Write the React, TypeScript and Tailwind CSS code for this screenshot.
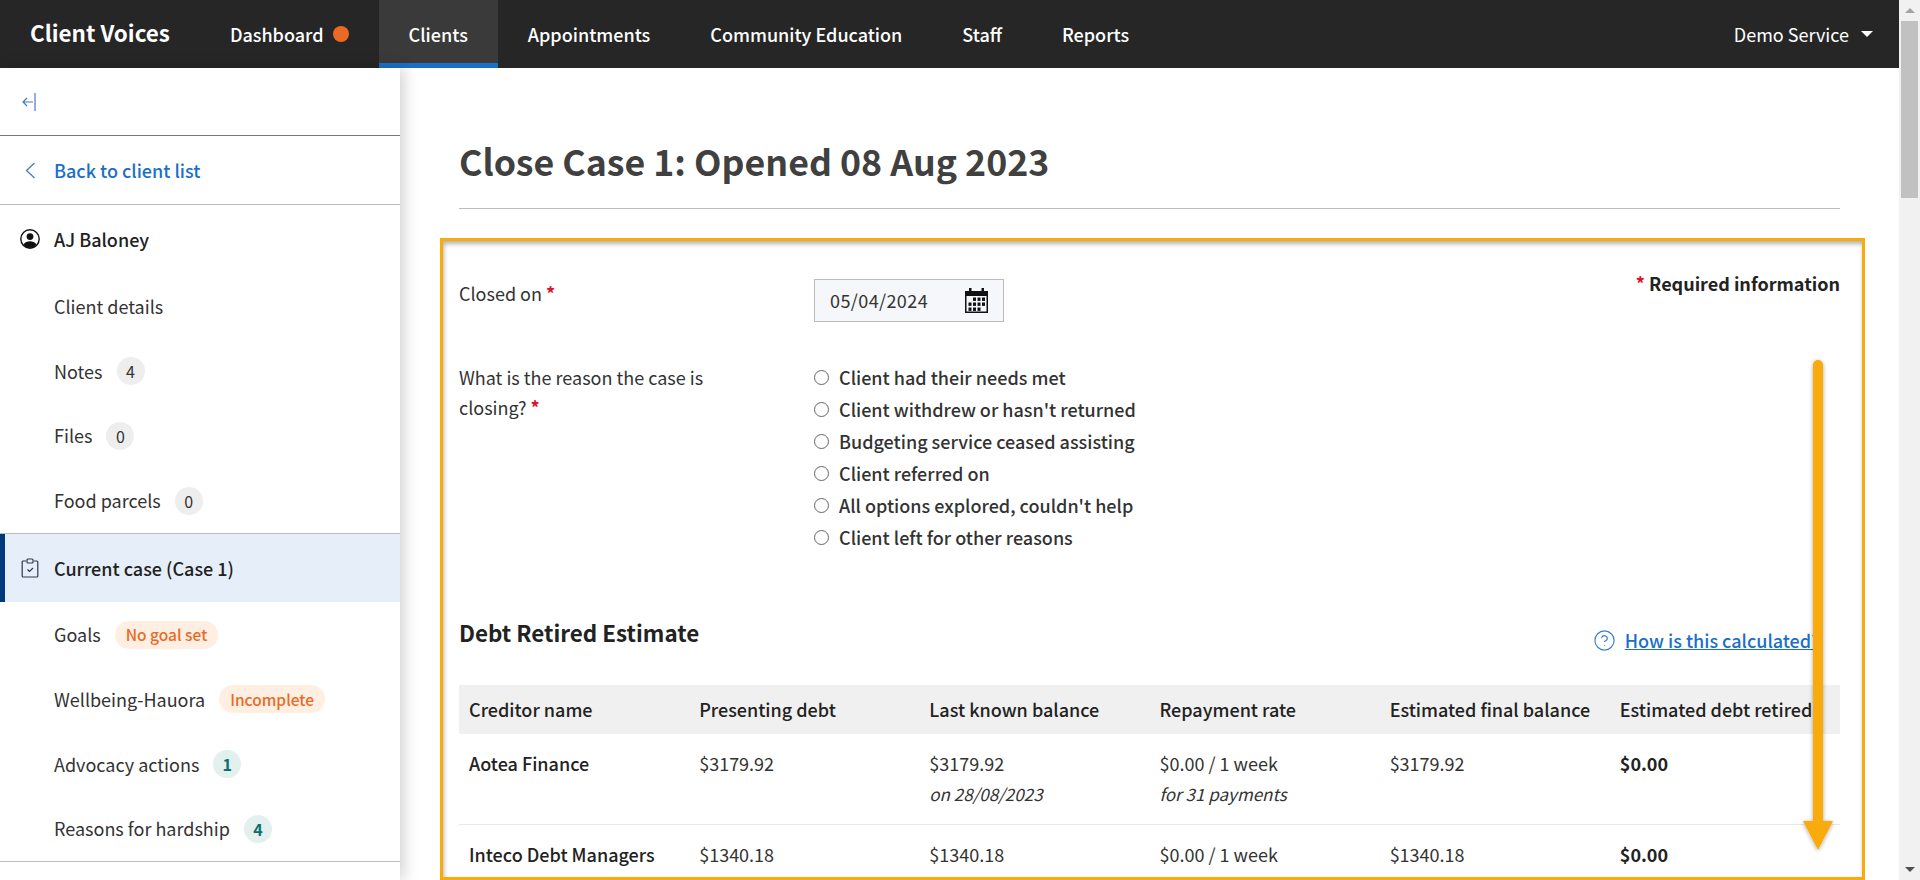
import { CircleHelp } from "lucide-react";

const font = "font-['Noto_Sans_CJK_SC','Liberation_Sans',sans-serif]";

function Badge({ label, tone }: { label: string; tone: "grey" | "teal" | "orange" }) {
  const tones = {
    grey: "bg-[#eeeeee] text-[#333333] w-[28px] justify-center text-[16px]",
    teal: "bg-[#e2f0ee] text-[#0f6e6a] w-[28px] justify-center font-semibold text-[16px]",
    orange: "bg-[#ffefe3] text-[#ea6a24] px-[11px] font-medium text-[15.5px]",
  };
  return (
    <span className={`ml-[14px] inline-flex h-[28px] items-center rounded-full leading-none ${tones[tone]}`}>
      {label}
    </span>
  );
}

function SideItem({ label, children }: { label: string; children?: React.ReactNode }) {
  return (
    <div className="flex h-[64.8px] items-center pl-[54px] text-[18px] text-[#333333]">
      <span>{label}</span>
      {children}
    </div>
  );
}

function Sidebar() {
  return (
    <aside className="z-10 w-[400px] shrink-0 bg-white shadow-[4px_0_14px_rgba(0,0,0,0.18)]">
      <div className="flex h-[67px] items-center pl-[22px]">
        <svg width="14" height="18" viewBox="0 0 14 18" fill="none" stroke="#4a78c8" strokeWidth="1.2">
          <path d="M1 9h10M5 5 1 9l4 4" />
          <path d="M13 0v18" />
        </svg>
      </div>
      <div className="h-px bg-[#777777]" />
      <div className="flex h-[68px] items-center pl-[25px] text-[18px] font-medium text-[#1a6fc9]">
        <svg width="11" height="17" viewBox="0 0 11 17" fill="none" stroke="#4a78c8" strokeWidth="1.3" className="mr-[18px]">
          <path d="M9.5 1 1.5 8.5l8 7.5" />
        </svg>
        <span>Back to client list</span>
      </div>
      <div className="h-px bg-[#bbbbbb]" />
      <div className="flex h-[69px] items-center pb-[1px] pl-[20px] text-[18px] font-medium text-[#222222]">
        <svg width="20" height="20" viewBox="0 0 20 20" className="mr-[14px]">
          <circle cx="10" cy="10" r="9.2" fill="none" stroke="#111" strokeWidth="1.4" />
          <circle cx="10" cy="7.6" r="3.4" fill="#111" />
          <path d="M3.4 15.6C5 13 7.4 12.2 10 12.2s5 .8 6.6 3.4A9 9 0 0 1 10 19a9 9 0 0 1-6.6-3.4Z" fill="#111" />
        </svg>
        <span>AJ Baloney</span>
      </div>
      <SideItem label="Client details" />
      <SideItem label="Notes">
        <Badge label="4" tone="grey" />
      </SideItem>
      <SideItem label="Files">
        <Badge label="0" tone="grey" />
      </SideItem>
      <SideItem label="Food parcels">
        <Badge label="0" tone="grey" />
      </SideItem>
      <div className="h-px bg-[#bbbbbb]" />
      <div className="flex h-[68px] items-center border-l-[5px] border-[#003a7d] bg-[#e6eff9] pl-[16px] text-[18px] font-medium text-[#222222]">
        <svg width="18" height="20" viewBox="0 0 18 20" fill="none" stroke="#2b3a4a" strokeWidth="1.2" className="mr-[15px]">
          <path d="M5 3H2.2a1 1 0 0 0-1 1v14a1 1 0 0 0 1 1h13.6a1 1 0 0 0 1-1V4a1 1 0 0 0-1-1H13" />
          <rect x="6" y="1" width="6" height="4" rx="1" />
          <path d="m6.5 11.5 2 2 3.5-3.5" />
        </svg>
        <span>Current case (Case 1)</span>
      </div>
      <SideItem label="Goals">
        <Badge label="No goal set" tone="orange" />
      </SideItem>
      <SideItem label="Wellbeing-Hauora">
        <Badge label="Incomplete" tone="orange" />
      </SideItem>
      <SideItem label="Advocacy actions">
        <Badge label="1" tone="teal" />
      </SideItem>
      <SideItem label="Reasons for hardship">
        <Badge label="4" tone="teal" />
      </SideItem>
      <div className="h-px bg-[#bbbbbb]" />
    </aside>
  );
}

const reasons = [
  "Client had their needs met",
  "Client withdrew or hasn't returned",
  "Budgeting service ceased assisting",
  "Client referred on",
  "All options explored, couldn't help",
  "Client left for other reasons",
];

const debts = [
  { name: "Aotea Finance", debt: "$3179.92", date: "on 28/08/2023", note: "for 31 payments" },
  { name: "Inteco Debt Managers", debt: "$1340.18", date: "", note: "" },
];

function CalendarIcon() {
  const cols = [3.5, 8, 12.5, 17];
  const rows = [
    { y: 9.5, from: 1, to: 4 },
    { y: 14.5, from: 0, to: 4 },
    { y: 19.5, from: 0, to: 3 },
  ];
  return (
    <svg width="23" height="25" viewBox="0 0 23 25" fill="#111">
      <path d="M0 3h4V0h2.5v3h10V0H19v3h4v22H0Zm1.5 5v15.5h20V8Z" fillRule="evenodd" />
      {rows.map((r) =>
        cols.slice(r.from, r.to).map((x) => <rect key={`${r.y}-${x}`} x={x} y={r.y} width="3" height="3.4" />),
      )}
    </svg>
  );
}

function Main() {
  return (
    <main className="relative flex-1 overflow-hidden bg-white px-[59px] text-[18px] text-[#333333]">
      <h1 className="h-[141px] border-b border-[#bbbbbb] pt-[68px] text-[35.7px] font-bold leading-[50px] text-[#404040]">
        Close Case 1: Opened 08 Aug 2023
      </h1>
      <div className="flex pt-[70px]">
        <div className="-mt-[1px] w-[355px] leading-[30px]">
          <span>Closed on </span>
          <span className="font-bold text-[#e0102a]">*</span>
        </div>
        <div className="flex h-[43px] w-[190px] items-center justify-between border border-[#bbbbbb] bg-[#f5f7fa] px-[15px] tracking-[0.4px]">
          <span>05/04/2024</span>
          <CalendarIcon />
        </div>
        <div className="ml-auto -mt-[11px] font-semibold leading-[30px] text-[#222222]">
          <span className="text-[#e0102a]">*</span> Required information
        </div>
      </div>
      <div className="flex pt-[39px]">
        <div className="mt-[1px] w-[355px] leading-[30px]">
          <div>What is the reason the case is</div>
          <div>
            closing? <span className="font-bold text-[#e0102a]">*</span>
          </div>
        </div>
        <div className="font-medium">
          {reasons.map((r) => (
            <label key={r} className="flex h-[32px] items-center">
              <span className="mr-[10px] h-[15px] w-[15px] rounded-full border border-[#666666] bg-white" />
              {r}
            </label>
          ))}
        </div>
      </div>
      <div className="flex items-center justify-between pt-[56px]">
        <h2 className="text-[22.4px] font-bold leading-[36px] text-[#222222]">Debt Retired Estimate</h2>
        <a className="mr-[20px] mt-[18px] flex items-center font-medium text-[#1a6fc9]">
          <CircleHelp size={23} strokeWidth={1.2} className="mr-[9px] text-[#3b7dd0]" />
          <span className="underline">How is this calculated?</span>
        </a>
      </div>
      <table className="mt-[31px] w-full table-fixed border-collapse leading-[30px]">
        <thead>
          <tr className="h-[49px] bg-[#f0f0f0] text-left">
            {["Creditor name", "Presenting debt", "Last known balance", "Repayment rate", "Estimated final balance", "Estimated debt retired"].map((h) => (
              <th key={h} className="pb-[2px] pl-[10px] font-medium text-[#222222]">{h}</th>
            ))}
          </tr>
        </thead>
        <tbody>
          {debts.map((d) => (
            <tr key={d.name} className="border-b border-[#e8e8e8] align-top">
              <td className="pb-[14px] pl-[10px] pt-[14px] font-medium text-[#222222]">{d.name}</td>
              <td className="pb-[14px] pl-[10px] pt-[14px]">{d.debt}</td>
              <td className="pb-[14px] pl-[10px] pt-[14px]">
                {d.debt}
                <div className="text-[17px] italic leading-[32px]">{d.date}</div>
              </td>
              <td className="pb-[14px] pl-[10px] pt-[14px]">
                $0.00 / 1 week
                <div className="text-[17px] italic leading-[32px]">{d.note}</div>
              </td>
              <td className="pb-[14px] pl-[10px] pt-[14px]">{d.debt}</td>
              <td className="pb-[14px] pl-[10px] pt-[14px] font-semibold text-[#222222]">$0.00</td>
            </tr>
          ))}
        </tbody>
      </table>
    </main>
  );
}

function Scrollbar() {
  return (
    <div className="flex w-[21px] shrink-0 flex-col items-center bg-[#f1f1f1]">
      <div className="flex h-[21px] w-full items-center justify-center">
        <span className="h-0 w-0 border-x-[5px] border-b-[5px] border-x-transparent border-b-[#a3a3a3]" />
      </div>
      <div className="h-[177px] w-[17px] bg-[#c1c1c1]" />
      <div className="flex-1" />
      <div className="flex h-[21px] w-full items-center justify-center">
        <span className="h-0 w-0 border-x-[5px] border-t-[5px] border-x-transparent border-t-[#505050]" />
      </div>
    </div>
  );
}

export default function App() {
  return (
    <div className={`relative flex h-[880px] w-[1920px] overflow-hidden ${font}`}>
      <div className="flex min-w-0 flex-1 flex-col">
        <header className="flex h-[68px] shrink-0 items-stretch bg-[#262626] text-[18px] font-medium text-white">
          <div className="flex items-center px-[30px] pb-[2px] text-[22.4px] font-bold">Client Voices</div>
          <div className="flex items-center px-[30px]">
            Dashboard
            <span className="ml-[9px] h-[16px] w-[16px] rounded-full bg-[#ea6a24]" />
          </div>
          <div className="flex items-center border-y-[5px] border-t-transparent border-b-[#1a6fc9] bg-[#3a3a3a] px-[30px]">Clients</div>
          <div className="flex items-center pl-[30px]">Appointments</div>
          <div className="flex items-center pl-[60px]">Community Education</div>
          <div className="flex items-center pl-[60px]">Staff</div>
          <div className="flex items-center pl-[60px]">Reports</div>
          <div className="ml-auto flex items-center pr-[26px] font-normal">
            Demo Service
            <span className="ml-[12px] h-0 w-0 border-x-[6px] border-t-[6px] border-x-transparent border-t-white" />
          </div>
        </header>
        <div className="flex min-h-0 flex-1">
          <Sidebar />
          <Main />
        </div>
      </div>
      <Scrollbar />
      {/* annotation drawn over the page */}
      <div className="pointer-events-none absolute left-[440px] top-[238px] z-20 h-[642px] w-[1425px] border-[3px] border-[#f9ab07] shadow-[inset_1px_3px_4px_rgba(0,0,0,0.3)]" />
      <svg className="pointer-events-none absolute left-[1798px] top-[355px] z-20" width="40" height="505" viewBox="0 0 40 505">
        <defs>
          <filter id="s" x="-50%" y="-5%" width="200%" height="110%">
            <feDropShadow dx="0" dy="1" stdDeviation="2" floodColor="#000" floodOpacity="0.35" />
          </filter>
        </defs>
        <path d="M15 10a5 5 0 0 1 10 0v456h10l-15 29-15-29h10Z" fill="#f9ab07" filter="url(#s)" />
      </svg>
    </div>
  );
}
